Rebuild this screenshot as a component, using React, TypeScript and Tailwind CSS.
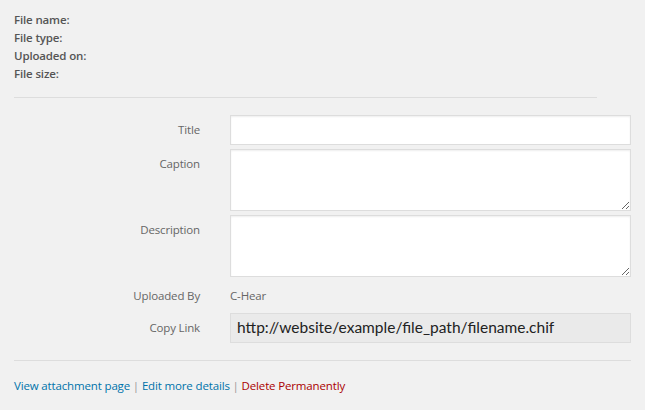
import React from 'react';

export default function App() {
  // Metadatos del archivo
  const meta = ['File name:', 'File type:', 'Uploaded on:', 'File size:'];

  return (
    <div
      className="w-[645px] h-[410px] bg-[#f1f1f1] text-[#666] overflow-hidden text-[11.5px] tracking-[-0.15px]"
      style={{ fontFamily: '"Open Sans", "Noto Sans", sans-serif' }}
    >
      {/* Detalles */}
      <div className="pt-[11px] pl-[14px]">
        {meta.map((m) => (
          <div key={m} className="leading-[18px] font-semibold text-[#555]">
            {m}
          </div>
        ))}
      </div>
      <div className="ml-[14px] mr-[48px] mt-[14px] border-t border-[#ddd]" />

      {/* Formulario */}
      <div className="mt-[17px] flex flex-col gap-[4px] pr-[14px]">
        <div className="flex items-center">
          <label className="w-[200px] text-right text-[#666]">Title</label>
          <input className="ml-[30px] flex-1 h-[30px] bg-white border border-[#ddd] shadow-[inset_0_1px_2px_rgba(0,0,0,0.07)] outline-none" />
        </div>
        <div className="flex items-start">
          <label className="w-[200px] text-right text-[#666] pt-[6px]">Caption</label>
          <textarea className="ml-[30px] flex-1 h-[62px] bg-white border border-[#ddd] shadow-[inset_0_1px_2px_rgba(0,0,0,0.07)] outline-none block" />
        </div>
        <div className="flex items-start">
          <label className="w-[200px] text-right text-[#666] pt-[6px]">Description</label>
          <textarea className="ml-[30px] flex-1 h-[62px] bg-white border border-[#ddd] shadow-[inset_0_1px_2px_rgba(0,0,0,0.07)] outline-none block" />
        </div>
        <div className="flex items-center h-[18px] mt-[6px]">
          <label className="w-[200px] text-right text-[#666]">Uploaded By</label>
          <span className="ml-[30px] text-[#666]">C-Hear</span>
        </div>
        <div className="flex items-center mt-[4px]">
          <label className="w-[200px] text-right text-[#666]">Copy Link</label>
          <div
            className="ml-[30px] flex-1 h-[30px] bg-[#eaeaea] border border-[#ddd] flex items-center px-[6px] text-[15.5px] tracking-normal text-[#222]"
            style={{ fontFamily: 'Lato, "DejaVu Sans", sans-serif' }}
          >
            http://website/example/file_path/filename.chif
          </div>
        </div>
      </div>

      <div className="ml-[14px] mr-[14px] mt-[17px] border-t border-[#ddd]" />

      {/* Acciones */}
      <div className="pl-[14px] mt-[16px]">
        <a className="text-[#0073aa]">View attachment page</a>
        <span className="text-[#999]"> | </span>
        <a className="text-[#0073aa]">Edit more details</a>
        <span className="text-[#999]"> | </span>
        <a className="text-[#a00]">Delete Permanently</a>
      </div>
    </div>
  );
}
